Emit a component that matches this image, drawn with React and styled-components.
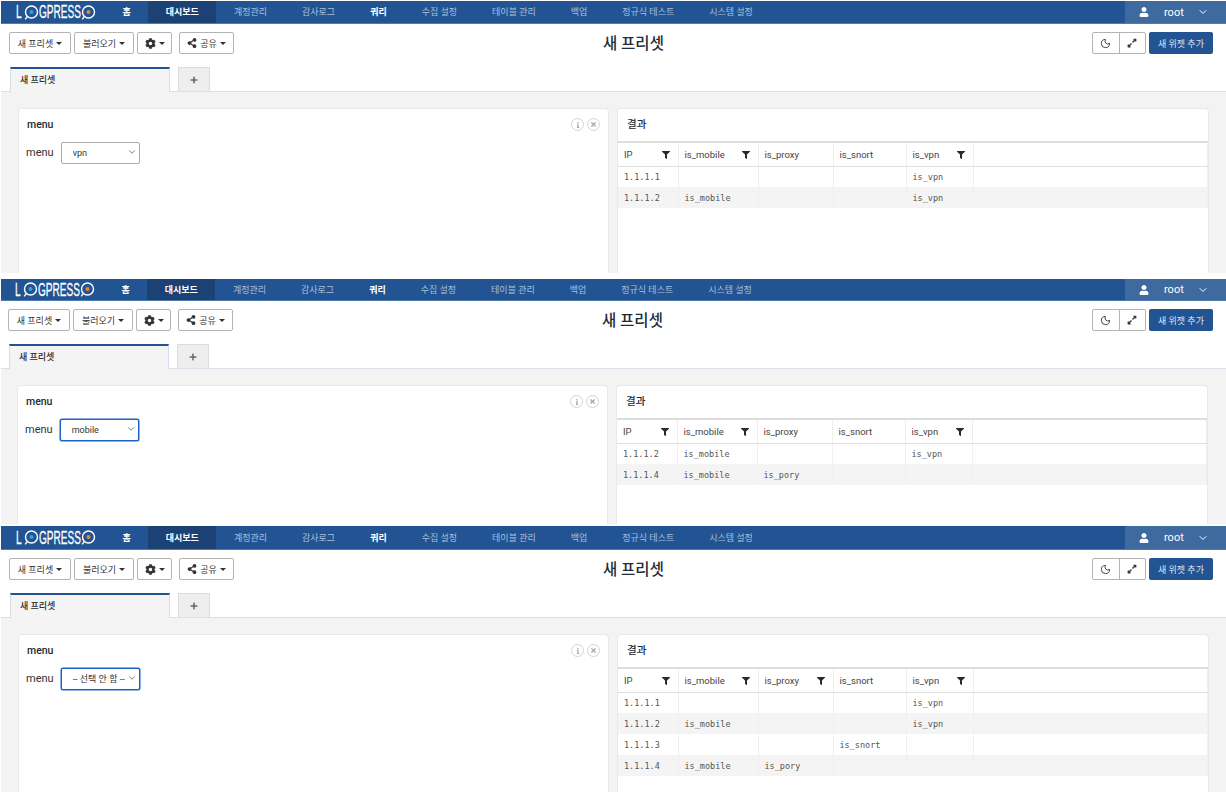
import React from 'react';
import styled, { createGlobalStyle } from 'styled-components';
import { FaCog, FaFilter, FaPlus, FaShareAlt, FaUser, FaExpandAlt, FaInfo, FaTimes } from 'react-icons/fa';
import { ChevronDown, Moon } from 'lucide-react';

const KR = `Roboto, "Noto Sans CJK KR", sans-serif`;

const GlobalStyle = createGlobalStyle`
  html, body {
    margin: 0;
    background: #fff;
    font-family: ${KR};
    overflow: hidden;
  }
`;

const Page = styled.div`
  padding: 1px 0 0 1px;
  height: 791px;
  overflow: hidden;
`;

const Screen = styled.section`
  height: ${(p) => p.$height}px;
  margin-bottom: ${(p) => p.$gap}px;
  display: flex;
  flex-direction: column;
  overflow: hidden;
`;

const Nav = styled.nav`
  flex: none;
  height: ${(p) => p.$height}px;
  background: #225493;
  border-bottom: 1px solid #4f7cb0;
  box-sizing: border-box;
  display: flex;
  align-items: stretch;
  padding-left: ${(p) => 15 - p.$shift}px;
`;

const Logo = styled.div`
  width: 89px;
  display: flex;
  align-items: center;
  color: #fff;
  font-family: "Liberation Sans", sans-serif;
  font-size: 18px;
  line-height: 1;
  -webkit-text-stroke: 0.3px #fff;
`;

const LogoText = styled.span`
  display: inline-block;
  transform: scaleX(0.56);
  transform-origin: left center;
  width: ${(p) => p.$width}px;
  white-space: nowrap;
`;

const NavItem = styled.a`
  display: flex;
  align-items: center;
  padding: 0 17.5px 1px;
  font-size: 9px;
  font-weight: ${(p) => (p.$strong ? 700 : 400)};
  color: ${(p) => (p.$strong ? '#fff' : '#a9c0dc')};
  background: ${(p) => (p.$active ? '#1b4175' : 'transparent')};
  white-space: nowrap;
`;

const UserMenu = styled.div`
  margin-left: auto;
  width: 101px;
  background: #3f6aa0;
  display: flex;
  align-items: center;
  color: #fff;
  font-size: 11px;
  box-sizing: border-box;
  padding-left: 14px;
`;

const UserName = styled.span`
  margin: 0 13px 0 15px;
`;

const Toolbar = styled.div`
  flex: none;
  display: flex;
  align-items: flex-start;
  box-sizing: border-box;
  height: ${(p) => p.$height}px;
  padding-top: 8px;
  padding-left: ${(p) => 8 - p.$shift}px;
  padding-right: 13px;
  background: #fff;
`;

const ToolButton = styled.button`
  height: 22px;
  width: ${(p) => p.$width}px;
  margin-right: ${(p) => p.$gap}px;
  padding: 0;
  display: flex;
  align-items: center;
  justify-content: center;
  gap: 3px;
  border: 1px solid #b4b4b4;
  border-radius: 2px;
  background: #fff;
  color: #333;
  font-family: ${KR};
  font-size: 9px;
`;

const Caret = styled.i`
  width: 0;
  height: 0;
  border-left: 3px solid transparent;
  border-right: 3px solid transparent;
  border-top: 3px solid #333;
`;

const Title = styled.h1`
  margin: 0 0 0 369px;
  font-size: 15.5px;
  line-height: 24px;
  font-weight: 500;
  color: #222b36;
  white-space: nowrap;
`;

const RightTools = styled.div`
  margin-left: auto;
  display: flex;
  gap: 3px;
`;

const IconGroup = styled.div`
  display: flex;
  height: 22px;
  border: 1px solid #b4b4b4;
  border-radius: 2px;
  box-sizing: border-box;
`;

const IconButton = styled.div`
  width: 25.5px;
  display: flex;
  align-items: center;
  justify-content: center;
  color: #333;
  & + & {
    border-left: 1px solid #b4b4b4;
  }
`;

const PrimaryButton = styled.button`
  width: 64px;
  height: 22px;
  border: 0;
  border-radius: 2px;
  background: #225493;
  color: #dbe5f1;
  font-family: ${KR};
  font-size: 9px;
  padding: 0;
`;

const Tabs = styled.div`
  flex: none;
  height: 25px;
  display: flex;
  box-sizing: border-box;
  padding-left: ${(p) => 9 - p.$shift}px;
  border-bottom: 1px solid #d8e1ea;
`;

const Tab = styled.div`
  width: 160px;
  height: 25px;
  box-sizing: border-box;
  background: #f4f4f4;
  border-top: 2px solid #225493;
  border-left: 1px solid #d3deea;
  border-right: 1px solid #d3deea;
  padding: 4px 0 0 9px;
  font-size: 9px;
  font-weight: 500;
  color: #2b2b2b;
  margin-right: 8px;
`;

const AddTab = styled.div`
  width: 32px;
  height: 24px;
  box-sizing: border-box;
  background: #eee;
  border: 1px solid #dcdcdc;
  border-bottom: 0;
  display: flex;
  align-items: center;
  justify-content: center;
  color: #666;
`;

const Body = styled.div`
  flex: 1;
  min-height: 0;
  background: #f3f3f3;
  display: grid;
  grid-template-columns: 591px 592px;
  gap: 8px;
  padding: 16px 0 0 ${(p) => 17 - p.$shift}px;
`;

const Panel = styled.div`
  position: relative;
  background: #fff;
  border: 1px solid #e9e9e9;
  border-bottom: 0;
  border-radius: 4px 4px 0 0;
`;

const PanelTitle = styled.h2`
  margin: 0;
  height: 32px;
  box-sizing: border-box;
  padding: 8px 0 0 ${(p) => p.$indent}px;
  font-size: 10.5px;
  line-height: 15px;
  font-weight: 500;
  color: #222b36;
`;

const PanelActions = styled.div`
  position: absolute;
  top: 9px;
  right: 8px;
  display: flex;
  gap: 3px;
`;

const RoundIcon = styled.span`
  width: 11px;
  height: 11px;
  border: 1px solid #d4d4d4;
  border-radius: 50%;
  display: flex;
  align-items: center;
  justify-content: center;
  color: #a8a8a8;
`;

const Field = styled.div`
  display: flex;
  align-items: center;
  gap: 7px;
  padding-left: 7px;
`;

const FieldLabel = styled.label`
  font-size: 11px;
  color: #333;
`;

const SelectBox = styled.div`
  position: relative;
  width: 79px;
  height: 22px;
`;

const Select = styled.select`
  width: 100%;
  height: 100%;
  appearance: none;
  box-sizing: border-box;
  background: #fff;
  border: ${(p) => (p.$focused ? '1px solid #1a63c4' : '1px solid #ababab')};
  box-shadow: ${(p) => (p.$focused ? '0 0 0 0.5px #1a63c4' : 'none')};
  border-radius: 2px;
  padding: 0 0 0 11px;
  font-family: ${KR};
  font-size: 9px;
  color: #333;
  outline: 0;
`;

const SelectArrow = styled(ChevronDown)`
  position: absolute;
  top: 6px;
  right: 3px;
  color: #666;
  pointer-events: none;
`;

const Table = styled.table`
  border-collapse: collapse;
  table-layout: fixed;
  width: 100%;
  border-top: 2px solid #dedede;
`;

const HeadCell = styled.th`
  position: relative;
  width: ${(p) => p.$width}px;
  height: 24px;
  box-sizing: border-box;
  padding: 0 6px;
  text-align: left;
  font-size: 9.5px;
  font-weight: 400;
  color: #444;
  border-right: 1px solid #eee;
  border-bottom: 1px solid #dedede;
`;

const HeadFilter = styled(FaFilter)`
  position: absolute;
  right: 8px;
  top: 8px;
  color: #222b36;
`;

const Row = styled.tr`
  background: ${(p) => (p.$striped ? '#f4f4f4' : '#fff')};
`;

const Cell = styled.td`
  height: 21px;
  box-sizing: border-box;
  padding: 0 6px;
  font-family: "DejaVu Sans Mono", monospace;
  font-size: 8.5px;
  color: #555;
  border-right: 1px solid #f0f0f0;
`;

const columns = [
  { key: 'ip', label: 'IP', width: 60 },
  { key: 'mobile', label: 'is_mobile', width: 80 },
  { key: 'proxy', label: 'is_proxy', width: 75 },
  { key: 'snort', label: 'is_snort', width: 73 },
  { key: 'vpn', label: 'is_vpn', width: 67 },
  { key: 'rest', label: '', width: undefined },
];

const menus = ['홈', '대시보드', '계정관리', '감사로그', '쿼리', '수집 설정', '테이블 관리', '백업', '정규식 테스트', '시스템 설정'];

const screens = [
  {
    id: 1, height: 272, gap: 6, navHeight: 23, toolHeight: 43, shift: 0, value: 'vpn',
    filters: ['ip', 'mobile', 'vpn'],
    rows: [
      { ip: '1.1.1.1', vpn: 'is_vpn' },
      { ip: '1.1.1.2', mobile: 'is_mobile', vpn: 'is_vpn' },
    ],
  },
  {
    id: 2, height: 245, gap: 2, navHeight: 22, toolHeight: 43, shift: 1, value: 'mobile', focused: true,
    filters: ['ip', 'mobile', 'vpn'],
    rows: [
      { ip: '1.1.1.2', mobile: 'is_mobile', vpn: 'is_vpn' },
      { ip: '1.1.1.4', mobile: 'is_mobile', proxy: 'is_pory' },
    ],
  },
  {
    id: 3, height: 266, gap: 0, navHeight: 24, toolHeight: 43, shift: 0, value: '', focused: true,
    filters: ['ip', 'mobile', 'proxy', 'vpn'],
    rows: [
      { ip: '1.1.1.1', vpn: 'is_vpn' },
      { ip: '1.1.1.2', mobile: 'is_mobile', vpn: 'is_vpn' },
      { ip: '1.1.1.3', snort: 'is_snort' },
      { ip: '1.1.1.4', mobile: 'is_mobile', proxy: 'is_pory' },
    ],
  },
];

const LogoMark = ({ dot }) => (
  <svg width="15" height="17" viewBox="0 0 15 17">
    <circle cx="7.5" cy="8" r="6" fill="none" stroke="#fff" strokeWidth="1.4" />
    <path d="M3.4 12.4 L1.2 15.4" fill="none" stroke="#fff" strokeWidth="1.4" />
    <circle cx="7.5" cy="8" r="2" fill={dot} />
  </svg>
);

const Dashboard = ({ screen }) => (
  <Screen $height={screen.height} $gap={screen.gap}>
    <Nav $height={screen.navHeight} $shift={screen.shift}>
      <Logo>
        <LogoText $width={8}>L</LogoText>
        <LogoMark dot="#3aa0d8" />
        <LogoText $width={42}>GPRESS</LogoText>
        <LogoMark dot="#e8862a" />
      </Logo>
      {menus.map((label) => (
        <NavItem key={label} $active={label === '대시보드'} $strong={['홈', '대시보드', '쿼리'].includes(label)}>
          {label}
        </NavItem>
      ))}
      <UserMenu>
        <FaUser size={10} />
        <UserName>root</UserName>
        <ChevronDown size={12} />
      </UserMenu>
    </Nav>

    <Toolbar $height={screen.toolHeight} $shift={screen.shift}>
      <ToolButton $width={62} $gap={3}>새 프리셋 <Caret /></ToolButton>
      <ToolButton $width={60} $gap={3}>불러오기 <Caret /></ToolButton>
      <ToolButton $width={35} $gap={7}><FaCog size={11} /> <Caret /></ToolButton>
      <ToolButton $width={55} $gap={0}><FaShareAlt size={10} />공유 <Caret /></ToolButton>
      <Title>새 프리셋</Title>
      <RightTools>
        <IconGroup>
          <IconButton><Moon size={11} /></IconButton>
          <IconButton><FaExpandAlt size={10} /></IconButton>
        </IconGroup>
        <PrimaryButton>새 위젯 추가</PrimaryButton>
      </RightTools>
    </Toolbar>

    <Tabs $shift={screen.shift}>
      <Tab>새 프리셋</Tab>
      <AddTab><FaPlus size={8} /></AddTab>
    </Tabs>

    <Body $shift={screen.shift}>
      <Panel>
        <PanelTitle $indent={8}>menu</PanelTitle>
        <PanelActions>
          <RoundIcon><FaInfo size={6} /></RoundIcon>
          <RoundIcon><FaTimes size={7} /></RoundIcon>
        </PanelActions>
        <Field>
          <FieldLabel>menu</FieldLabel>
          <SelectBox>
            <Select $focused={screen.focused} defaultValue={screen.value}>
              <option value="">-- 선택 안 함 --</option>
              <option value="vpn">vpn</option>
              <option value="mobile">mobile</option>
            </Select>
            <SelectArrow size={10} />
          </SelectBox>
        </Field>
      </Panel>
      <Panel>
        <PanelTitle $indent={9}>결과</PanelTitle>
        <Table>
          <thead>
            <tr>
              {columns.map((col) => (
                <HeadCell key={col.key} $width={col.width}>
                  {col.label}
                  {screen.filters.includes(col.key) && <HeadFilter size={8} />}
                </HeadCell>
              ))}
            </tr>
          </thead>
          <tbody>
            {screen.rows.map((row, i) => (
              <Row key={row.ip} $striped={i % 2 === 1}>
                {columns.map((col) => <Cell key={col.key}>{row[col.key]}</Cell>)}
              </Row>
            ))}
          </tbody>
        </Table>
      </Panel>
    </Body>
  </Screen>
);

export default function App() {
  return (
    <Page>
      <GlobalStyle />
      {screens.map((screen) => <Dashboard key={screen.id} screen={screen} />)}
    </Page>
  );
}
